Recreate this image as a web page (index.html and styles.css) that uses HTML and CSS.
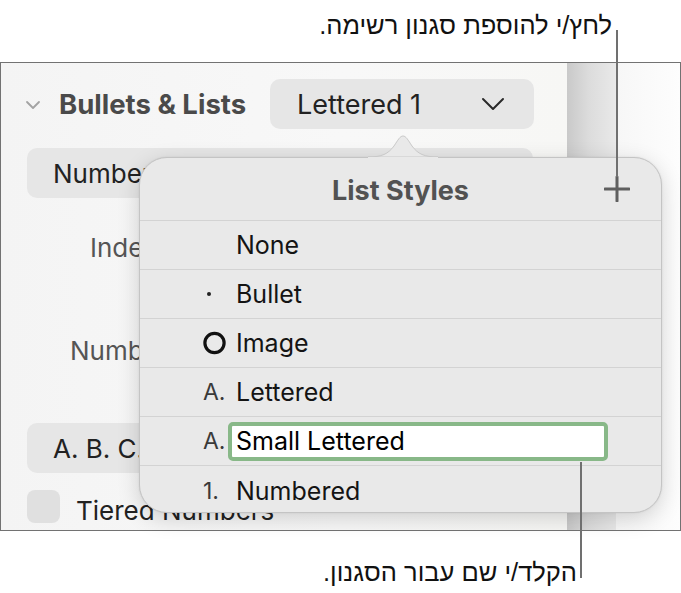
FILE: index.html
```html
<!DOCTYPE html>
<html lang="he">
<head>
<meta charset="utf-8">
<title>List Styles</title>
<link rel="stylesheet" href="styles.css">
</head>
<body>
<div class="page">
  <p class="note note-top" dir="rtl">לחץ/י להוספת סגנון רשימה.</p>
  <div class="frame">
    <div class="panel">
      <div class="section-head">
        <svg class="disclosure" width="16" height="10" viewBox="0 0 16 10"><path d="M2 2 L8 8 L14 2" fill="none" stroke="#a3a3a3" stroke-width="1.8" stroke-linecap="round" stroke-linejoin="round"/></svg>
        <span class="section-title">Bullets &amp; Lists</span>
        <div class="popup popup-style">
          <span>Lettered 1</span>
          <svg class="popup-chevron" width="24" height="14" viewBox="0 0 24 14"><path d="M2 2 L12 12 L22 2" fill="none" stroke="#2a2a2a" stroke-width="2" stroke-linecap="round" stroke-linejoin="round"/></svg>
        </div>
      </div>
      <div class="popup popup-wide">Numbered</div>
      <div class="field-row row-indent">Indent</div>
      <div class="field-row row-number">Number</div>
      <div class="popup popup-wide popup-abc">A. B. C.</div>
      <div class="check-row">
        <span class="checkbox"></span>
        <span class="check-label">Tiered Numbers</span>
      </div>
    </div>
    <div class="divider"></div>
    <div class="side"></div>

    <div class="popover">
      <svg class="popover-arrow" width="70" height="24" viewBox="0 0 70 24"><path d="M0 23 C14 23 20 20 26 12 C30 6 32 2 35 2 C38 2 40 6 44 12 C50 20 56 23 70 23 Z" fill="#e9e9e9" stroke="#c9c9c9" stroke-width="1"/><rect x="0" y="23" width="70" height="2" fill="#e9e9e9"/></svg>
      <div class="popover-head">
        <span class="popover-title">List Styles</span>
        <svg class="plus" width="26" height="26" viewBox="0 0 26 26"><path d="M13 1 V25 M1 13 H25" stroke="#5f5f5f" stroke-width="3" stroke-linecap="round"/></svg>
      </div>
      <ul class="styles">
        <li class="style-row"><span class="marker"></span><span class="style-name">None</span></li>
        <li class="style-row"><span class="marker"><span class="dot"></span></span><span class="style-name">Bullet</span></li>
        <li class="style-row"><span class="marker"><svg width="24" height="24" viewBox="0 0 24 24"><circle cx="11.5" cy="12" r="9.6" fill="none" stroke="#111" stroke-width="3.2"/></svg></span><span class="style-name">Image</span></li>
        <li class="style-row"><span class="marker">A.</span><span class="style-name">Lettered</span></li>
        <li class="style-row"><span class="marker">A.</span><span class="name-input">Small Lettered</span></li>
        <li class="style-row"><span class="marker">1.</span><span class="style-name">Numbered</span></li>
      </ul>
    </div>
  </div>
  <p class="note note-bottom" dir="rtl">הקלד/י שם עבור הסגנון.</p>
  <span class="leader leader-top"></span>
  <span class="leader leader-bottom"></span>
</div>
</body>
</html>
```
FILE: styles.css
```css
* { box-sizing: border-box; }
html, body { margin: 0; padding: 0; background: #fff; }
body { font-family: "Inter", "Liberation Sans", sans-serif; color: #1c1c1c; }

.page {
  position: relative;
  width: 681px;
  height: 593px;
  overflow: hidden;
}

.note {
  margin: 0;
  font-family: "Liberation Sans", "DejaVu Sans", sans-serif;
  font-size: 25.5px;
  line-height: 28px;
  color: #111;
}
.note-top {
  height: 62px;
  padding-top: 11px;
  padding-right: 69px;
}
.note-bottom {
  padding-top: 27px;
  padding-right: 104px;
}

.frame {
  position: relative;
  display: flex;
  height: 469px;
  border: 1px solid #727272;
  background: #fafafa;
}

.panel {
  flex: 0 0 566px;
  display: flex;
  flex-direction: column;
  padding-left: 26px;
  background: linear-gradient(90deg, #f4f4f4 0%, #f8f8f8 60%, #f7f7f5 100%);
  overflow: hidden;
}

.section-head {
  display: flex;
  align-items: center;
  margin-top: 16px;
  height: 50px;
}
.disclosure { margin-left: -2px; margin-top: 2px; }
.section-title {
  margin-left: 18px;
  font-size: 27.5px;
  font-weight: 700;
  color: #4a4a4a;
}

.popup {
  display: flex;
  align-items: center;
  height: 50px;
  border-radius: 10px;
  background: #e6e6e6;
  font-size: 26px;
  color: #222;
}
.popup-style {
  margin-left: auto;
  margin-right: 33px;
  width: 264px;
  padding-left: 27px;
  font-size: 27px;
}
.popup-chevron { margin-left: auto; margin-right: 29px; }
.popup-wide {
  width: 506px;
  margin-top: 19px;
  padding-left: 26px;
}
.popup-abc { margin-top: 19px; }

.field-row {
  display: flex;
  align-items: center;
  font-size: 26px;
  color: #555;
}
.row-indent { height: 98px; padding-left: 63px; }
.row-number { height: 108px; padding-left: 43px; }

.check-row {
  display: flex;
  align-items: center;
  margin-top: 17px;
  height: 33px;
}
.checkbox {
  width: 33px;
  height: 33px;
  border-radius: 8px;
  background: #e0e0e0;
}
.check-label {
  margin-left: 16px;
  font-size: 26px;
  color: #222;
  padding-top: 8px;
}

.divider {
  flex: 0 0 49px;
  background: linear-gradient(90deg, #c9c9c9 0%, #dcdcdc 45%, #e9e9e9 100%);
}
.side {
  flex: 1;
  background: linear-gradient(90deg, #f7f7f7 0%, #fdfdfd 100%);
}

.popover {
  position: absolute;
  left: 138px;
  top: 94px;
  width: 523px;
  height: 356px;
  background: #e9e9e9;
  border: 1px solid #c4c4c4;
  border-radius: 28px;
  box-shadow: 0 6px 22px rgba(0, 0, 0, 0.16), 0 0 2px rgba(0, 0, 0, 0.1);
}
.popover-arrow {
  position: absolute;
  left: 228px;
  top: -24px;
}
.popover-head {
  position: relative;
  display: flex;
  align-items: center;
  justify-content: center;
  height: 63px;
  border-bottom: 1px solid #d3d3d3;
}
.popover-title {
  font-size: 27px;
  font-weight: 700;
  color: #525252;
  margin-top: 2px;
}
.plus {
  position: absolute;
  right: 31px;
  top: 18px;
}

.styles {
  list-style: none;
  margin: 0;
  padding: 0;
}
.style-row {
  display: flex;
  align-items: center;
  height: 49px;
  padding-left: 63px;
  border-bottom: 1px solid #d3d3d3;
}
.style-row:last-child { border-bottom: none; }
.marker {
  display: flex;
  align-items: center;
  width: 33px;
  font-size: 23px;
  font-weight: 400;
  color: #3a3a3a;
}
.dot {
  width: 4px;
  height: 4px;
  margin-left: 4px;
  border-radius: 50%;
  background: #222;
}
.style-name {
  font-size: 25px;
  color: #141414;
}
.name-input {
  display: flex;
  align-items: center;
  margin-left: -8px;
  width: 380px;
  height: 39px;
  padding-left: 4px;
  border: 4px solid #88b888;
  border-radius: 5px;
  background: #fff;
  font-size: 25px;
  color: #000;
}

.leader {
  position: absolute;
  width: 2px;
  background: #707070;
}
.leader-top { left: 616px; top: 30px; height: 147px; }
.leader-bottom { left: 580px; top: 462px; height: 116px; }
```
